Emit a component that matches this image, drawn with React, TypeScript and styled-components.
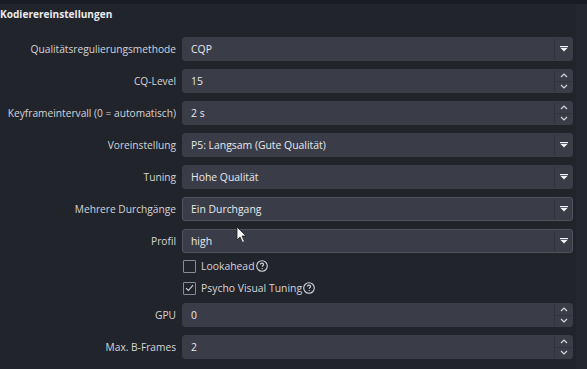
import styled, { createGlobalStyle } from "styled-components";

const GlobalStyle = createGlobalStyle`
  html, body {
    margin: 0;
    padding: 0;
    background: #22242b;
  }
  body {
    font-family: "Open Sans", "Noto Sans", sans-serif;
    -webkit-font-smoothing: antialiased;
  }
`

const Page = styled.div`
  position: relative;
  width: 587px;
  height: 369px;
  overflow: hidden;
  background: #22242b;
  border-top: 4px solid #1a1c22;
  box-sizing: border-box;
  display: flex;
`

const Content = styled.div`
  flex: 1;
  display: flex;
  flex-direction: column;
`

const RightStrip = styled.div`
  width: 11px;
  background: #25272f;
`

const Heading = styled.div`
  height: 20px;
  font-size: 10.1px;
  font-weight: 700;
  color: #e9eaee;
  line-height: 20px;
  margin-bottom: 13px;
`

const Form = styled.div`
  display: flex;
  flex-direction: column;
`

const Row = styled.div<{ $gap?: number }>`
  display: flex;
  align-items: center;
  height: 24px;
  margin-bottom: ${p => p.$gap ?? 8}px;
`

const Label = styled.div`
  width: 176px;
  text-align: right;
  padding-right: 6px;
  font-size: 10.2px;
  color: #d4d5da;
  white-space: nowrap;
  box-sizing: content-box;
`

const Field = styled.div<{ $hover?: boolean }>`
  width: 391px;
  height: 24px;
  box-sizing: border-box;
  display: flex;
  align-items: stretch;
  background: #3a3d48;
  border: 1px solid ${p => (p.$hover ? "#4f5260" : "#3a3d48")};
  border-radius: 3px;
`

const Value = styled.div`
  flex: 1;
  display: flex;
  align-items: center;
  padding-left: 8px;
  font-size: 10.4px;
  color: #e8e9ec;
`

const ArrowBox = styled.div`
  width: 17px;
  border-left: 1px solid #30323c;
  display: flex;
  align-items: center;
  justify-content: center;
`

const SpinBox = styled.div`
  width: 17px;
  border-left: 1px solid #30323c;
  display: flex;
  flex-direction: column;
`

const SpinHalf = styled.div<{ $top?: boolean }>`
  flex: 1;
  display: flex;
  align-items: center;
  justify-content: center;
  border-bottom: ${p => (p.$top ? "1px solid #30323c" : "none")};
`

const CheckRow = styled.div`
  display: flex;
  align-items: center;
  height: 22px;
  padding-left: 182px;
`

const Box = styled.div`
  width: 11px;
  height: 11px;
  border: 1px solid #8a8c95;
  border-radius: 1px;
  margin-left: 1px;
  display: flex;
  align-items: center;
  justify-content: center;
`

const CheckText = styled.span`
  margin-left: 5px;
  font-size: 10.4px;
  color: #d4d5da;
`

const Help = styled.svg`
  margin-left: 1px;
  vertical-align: middle;
`

const Cursor = styled.svg`
  position: absolute;
  left: 236px;
  top: 222px;
`

const DropArrow = () => (
  <svg width="8" height="6" viewBox="0 0 8 6">
    <rect x="0" y="0" width="8" height="1.2" fill="#f2f2f2" />
    <path d="M0.5 2 L7.5 2 L4 5.5 Z" fill="#f2f2f2" />
  </svg>
)

const Chevron = ({ up }: { up?: boolean }) => (
  <svg width="8" height="5" viewBox="0 0 8 5">
    <path
      d={up ? "M1 4 L4 1 L7 4" : "M1 1 L4 4 L7 1"}
      fill="none"
      stroke="#d6d7dc"
      strokeWidth="1.2"
    />
  </svg>
)

const HelpIcon = () => (
  <Help width="12" height="12" viewBox="0 0 12 12">
    <circle cx="6" cy="6" r="5.3" fill="none" stroke="#d4d5da" strokeWidth="1.1" />
    <path
      d="M4.4 4.6 C4.4 3.6 5.1 3.1 6 3.1 C6.9 3.1 7.6 3.7 7.6 4.5 C7.6 5.5 6.2 5.6 6.2 6.8"
      fill="none"
      stroke="#d4d5da"
      strokeWidth="1.1"
    />
    <circle cx="6.2" cy="8.6" r="0.7" fill="#d4d5da" />
  </Help>
)

const Spinner = () => (
  <SpinBox>
    <SpinHalf $top>
      <Chevron up />
    </SpinHalf>
    <SpinHalf>
      <Chevron />
    </SpinHalf>
  </SpinBox>
)

const Select = ({ label, value, hover, gap }: { label: string; value: string; hover?: boolean; gap?: number }) => (
  <Row $gap={gap}>
    <Label>{label}</Label>
    <Field $hover={hover}>
      <Value>{value}</Value>
      <ArrowBox>
        <DropArrow />
      </ArrowBox>
    </Field>
  </Row>
)

const Spin = ({ label, value }: { label: string; value: string }) => (
  <Row>
    <Label>{label}</Label>
    <Field>
      <Value>{value}</Value>
      <Spinner />
    </Field>
  </Row>
)

const App = () => {
  return <>
    <GlobalStyle />
    <Page>
      <Content>
        <Heading>Kodierereinstellungen</Heading>
        <Form>
          <Select label="Qualitätsregulierungsmethode" value="CQP" />
          <Spin label="CQ-Level" value="15" />
          <Spin label="Keyframeintervall (0 = automatisch)" value="2 s" />
          <Select label="Voreinstellung" value="P5: Langsam (Gute Qualität)" />
          <Select label="Tuning" value="Hohe Qualität" />
          <Select label="Mehrere Durchgänge" value="Ein Durchgang" hover />
          <Select label="Profil" value="high" hover gap={2} />
          <CheckRow>
            <Box />
            <CheckText>Lookahead</CheckText>
            <HelpIcon />
          </CheckRow>
          <CheckRow style={{ marginBottom: 4 }}>
            <Box>
              <svg width="9" height="8" viewBox="0 0 9 8">
                <path d="M1 4.2 L3.4 6.5 L8 1.2" fill="none" stroke="#d4d5da" strokeWidth="1.1" />
              </svg>
            </Box>
            <CheckText>Psycho Visual Tuning</CheckText>
            <HelpIcon />
          </CheckRow>
          <Spin label="GPU" value="0" />
          <Spin label="Max. B-Frames" value="2" />
        </Form>
      </Content>
      <RightStrip />
      <Cursor width="12" height="18" viewBox="0 0 12 18">
        <path d="M1 1 L1 14 L4 11 L6.5 16.5 L8.5 15.5 L6 10 L10 10 Z" fill="#f5f5f5" stroke="#222" strokeWidth="0.8" />
      </Cursor>
    </Page>
  </>
}

export default App;
